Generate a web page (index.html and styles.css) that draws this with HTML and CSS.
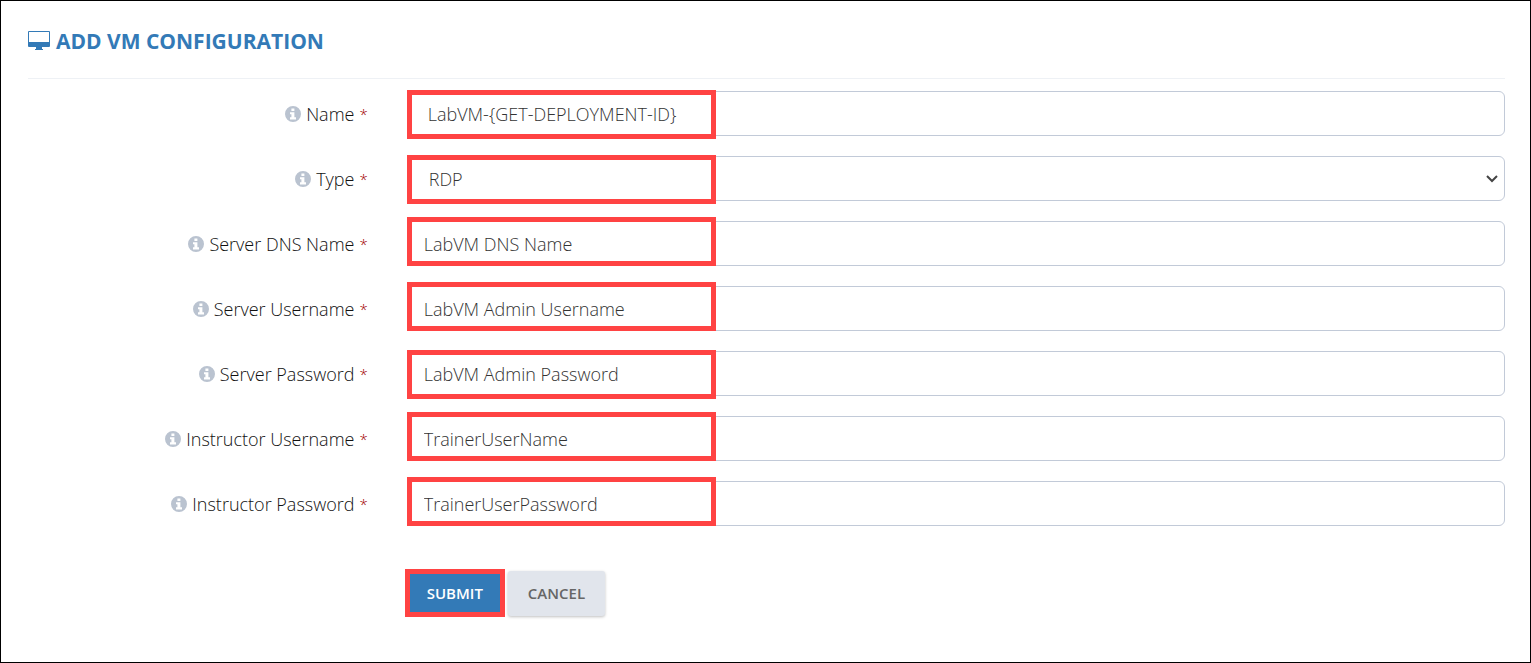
FILE: index.html
```html
<!DOCTYPE html>
<html lang="en">
<head>
<meta charset="utf-8">
<title>Add VM Configuration</title>
<link rel="stylesheet" href="styles.css">
</head>
<body>
<svg class="sprite" aria-hidden="true">
  <symbol id="info" viewBox="0 0 16 16">
    <path fill-rule="evenodd" d="M8 0a8 8 0 1 0 0 16A8 8 0 0 0 8 0zM6.4 2.4h3v2.6h-3zM5 6.2h4.4v5H11v2.2H5v-2.2h1.4V8.3H5z"/>
  </symbol>
</svg>
<main class="page">
  <header class="page-header">
    <svg class="title-icon" viewBox="0 0 22 20" aria-hidden="true">
      <path fill-rule="evenodd" d="M1 0h20a1 1 0 0 1 1 1v14a1 1 0 0 1-1 1h-7v2h1v1H7v-1h1v-2H1a1 1 0 0 1-1-1V1a1 1 0 0 1 1-1zM1 1v10h20V1z"/>
    </svg>
    <h1 class="title">ADD VM CONFIGURATION</h1>
  </header>
  <form class="form">
    <div class="row">
      <label class="label" for="name"><svg class="info"><use href="#info"/></svg>Name <span class="required">*</span></label>
      <div class="field"><input class="control control-indent" id="name" type="text" value="LabVM-{GET-DEPLOYMENT-ID}"><span class="highlight"></span></div>
    </div>
    <div class="row">
      <label class="label" for="type"><svg class="info"><use href="#info"/></svg>Type <span class="required">*</span></label>
      <div class="field">
        <select class="control" id="type"><option>RDP</option></select>
        <svg class="chevron" viewBox="0 0 12 8" aria-hidden="true"><path d="M1 1l5 5 5-5"/></svg>
        <span class="highlight"></span>
      </div>
    </div>
    <div class="row">
      <label class="label" for="dns"><svg class="info"><use href="#info"/></svg>Server DNS Name <span class="required">*</span></label>
      <div class="field"><input class="control" id="dns" type="text" value="LabVM DNS Name"><span class="highlight highlight-raised"></span></div>
    </div>
    <div class="row">
      <label class="label" for="user"><svg class="info"><use href="#info"/></svg>Server Username <span class="required">*</span></label>
      <div class="field"><input class="control" id="user" type="text" value="LabVM Admin Username"><span class="highlight highlight-raised"></span></div>
    </div>
    <div class="row">
      <label class="label" for="password"><svg class="info"><use href="#info"/></svg>Server Password <span class="required">*</span></label>
      <div class="field"><input class="control" id="password" type="text" value="LabVM Admin Password"><span class="highlight"></span></div>
    </div>
    <div class="row">
      <label class="label" for="trainer"><svg class="info"><use href="#info"/></svg>Instructor Username <span class="required">*</span></label>
      <div class="field"><input class="control" id="trainer" type="text" value="TrainerUserName"><span class="highlight highlight-raised"></span></div>
    </div>
    <div class="row">
      <label class="label" for="trainer-password"><svg class="info"><use href="#info"/></svg>Instructor Password <span class="required">*</span></label>
      <div class="field"><input class="control" id="trainer-password" type="text" value="TrainerUserPassword"><span class="highlight highlight-raised"></span></div>
    </div>
    <div class="actions">
      <button class="button button-primary" type="button">SUBMIT</button>
      <button class="button button-default" type="button">CANCEL</button>
    </div>
  </form>
</main>
</body>
</html>
```
FILE: styles.css
```css
* {
  box-sizing: border-box;
}

body {
  margin: 0;
  background: #fff;
  color: #111;
  font-family: "Open Sans", "Noto Sans", sans-serif;
  font-size: 18px;
  font-weight: 300;
}

.sprite {
  position: absolute;
  width: 0;
  height: 0;
}

.page {
  min-height: 100vh;
  padding: 24px 25px 44px 27px;
  border: 1px solid #000;
}

.page-header {
  display: flex;
  align-items: center;
  gap: 6px;
  padding-bottom: 21px;
  border-bottom: 1px solid #eef1f5;
}

.title-icon {
  width: 22px;
  height: 20px;
  fill: #337ab7;
}

.title {
  margin: 0;
  color: #337ab7;
  font-size: 21px;
  font-weight: 700;
  line-height: 32px;
}

.form {
  display: grid;
  gap: 20px;
  padding-top: 12px;
}

.row {
  display: grid;
  grid-template-columns: 23% 1fr;
  column-gap: 39px;
}

.label {
  display: flex;
  align-items: center;
  justify-content: flex-end;
  gap: 5px;
  padding-top: 1px;
  line-height: 24px;
  white-space: nowrap;
}

.info {
  width: 16px;
  height: 16px;
  fill: #bac3d0;
}

.required {
  color: #a00000;
  font-size: 15px;
}

.field {
  position: relative;
}

.control {
  display: block;
  width: 100%;
  height: 45px;
  padding: 6px 16px;
  border: 1px solid #c2cad8;
  border-radius: 6px;
  background: #fff;
  color: #333;
  font: inherit;
}

.control-indent {
  padding-left: 20px;
}

select.control {
  padding: 6px 32px 6px 21px;
  appearance: none;
}

.chevron {
  position: absolute;
  top: 19px;
  right: 7px;
  width: 12px;
  height: 8px;
  fill: none;
  stroke: #444;
  stroke-width: 2;
  pointer-events: none;
}

/* Callout frame over the start of a field */
.highlight {
  position: absolute;
  top: -1px;
  left: 0;
  width: 309px;
  height: 49px;
  border: 5px solid #ff4343;
  pointer-events: none;
}

.highlight-raised {
  top: -4px;
}

.actions {
  display: flex;
  align-items: center;
  gap: 3px;
  margin-top: 23px;
  margin-left: calc(23% + 37px);
}

.button {
  height: 45px;
  padding: 0 20px;
  border: 0;
  border-radius: 3px;
  font: inherit;
  font-size: 15px;
  font-weight: 600;
}

.button-primary {
  height: 48px;
  padding: 0 17px;
  border: 5px solid #ff4343;
  border-radius: 0;
  background: #337ab7;
  color: #fff;
}

.button-default {
  background: #e1e5ec;
  color: #666;
  box-shadow: 0 1px 3px rgba(0, 0, 0, 0.25);
}
```
